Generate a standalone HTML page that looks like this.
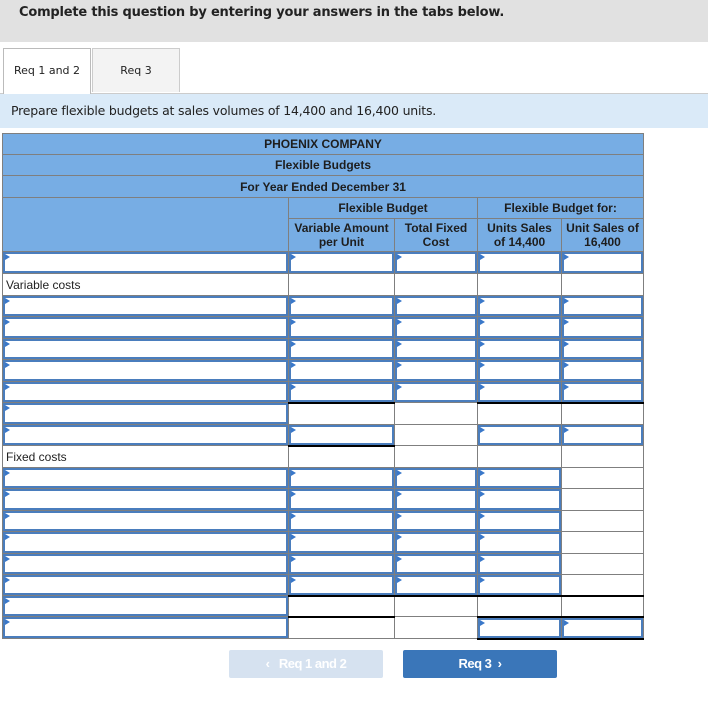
<!DOCTYPE html>
<html><head><meta charset="utf-8"><style>
body{margin:0;width:708px;height:702px;background:#fff;font-family:"Liberation Sans",Arial,sans-serif;position:relative;overflow:hidden}
.top{position:absolute;left:0;top:0;width:708px;height:42px;background:#e1e1e1}
.top span{position:absolute;left:19px;top:5px;font:bold 13px "DejaVu Sans",Verdana,sans-serif;color:#222;letter-spacing:-0.2px}
.tab{position:absolute;top:48px;height:44px;font:11px "DejaVu Sans",Verdana,sans-serif;color:#222;text-align:center;line-height:44px;box-sizing:border-box}
.t1{left:3px;width:88px;background:#fff;border:1px solid #bbb;border-bottom:none;height:46px}
.t2{left:92px;width:88px;background:#f3f3f3;border:1px solid #ccc;border-bottom:none}
.instr{position:absolute;left:0;top:93px;width:708px;height:34px;background:#daeaf8;border-top:1px solid #ccc}
.instr span{position:absolute;left:11px;top:9px;font:12.5px "DejaVu Sans",Verdana,sans-serif;color:#222;letter-spacing:-0.2px}
table{position:absolute;left:2px;top:133px;border-collapse:collapse;table-layout:fixed;font-size:12px;color:#222}
td{border:1px solid #7f7f7f;padding:0;position:relative;box-sizing:border-box}
.h td{background:#77ade4;text-align:center;font-weight:bold;color:#1e1e1e}
.i::before{content:"";position:absolute;left:0;top:0;right:0;bottom:0;border:2px solid #4a7dbd}
.i::after{content:"";position:absolute;left:2px;top:2px;border-left:5px solid #3a78c9;border-top:3px solid transparent;border-bottom:3px solid transparent;height:0}
.lab{padding-left:3px;font-size:12px}
.bk{border-top:2px solid #000}
.bb{border-bottom:2px solid #000}
.btn{position:absolute;top:650px;height:28px;width:154px;border-radius:2px;color:#fff;font:bold 13px "Liberation Sans",Arial,sans-serif;text-align:center;line-height:28px;letter-spacing:-0.5px}
</style></head><body>
<div class="top"><span>Complete this question by entering your answers in the tabs below.</span></div>
<div class="tab t2">Req 3</div>
<div class="instr"><span>Prepare flexible budgets at sales volumes of 14,400 and 16,400 units.</span></div>
<div class="tab t1">Req 1 and 2</div>
<table>
<colgroup><col style="width:286px"><col style="width:106px"><col style="width:83px"><col style="width:84px"><col style="width:82px"></colgroup>
<tr class="h" style="height:21px"><td colspan="5">PHOENIX COMPANY</td></tr>
<tr class="h" style="height:21px"><td colspan="5">Flexible Budgets</td></tr>
<tr class="h" style="height:22px"><td colspan="5">For Year Ended December 31</td></tr>
<tr class="h" style="height:21px"><td rowspan="2"></td><td colspan="2">Flexible Budget</td><td colspan="2">Flexible Budget for:</td></tr>
<tr class="h" style="height:33px"><td style="line-height:14px">Variable Amount<br>per Unit</td><td style="line-height:14px">Total Fixed<br>Cost</td><td style="line-height:14px">Units Sales<br>of 14,400</td><td style="line-height:14px">Unit Sales of<br>16,400</td></tr>
<tr style="height:22px"><td class="i"></td><td class="i"></td><td class="i"></td><td class="i"></td><td class="i"></td></tr>
<tr style="height:22px"><td class="lab">Variable costs</td><td></td><td></td><td></td><td></td></tr>
<tr style="height:21px"><td class="i"></td><td class="i"></td><td class="i"></td><td class="i"></td><td class="i"></td></tr>
<tr style="height:22px"><td class="i"></td><td class="i"></td><td class="i"></td><td class="i"></td><td class="i"></td></tr>
<tr style="height:21px"><td class="i"></td><td class="i"></td><td class="i"></td><td class="i"></td><td class="i"></td></tr>
<tr style="height:22px"><td class="i"></td><td class="i"></td><td class="i"></td><td class="i"></td><td class="i"></td></tr>
<tr style="height:21px"><td class="i"></td><td class="i"></td><td class="i"></td><td class="i"></td><td class="i"></td></tr>
<tr style="height:22px"><td class="i"></td><td class="bk"></td><td></td><td class="bk"></td><td class="bk"></td></tr>
<tr style="height:21px"><td class="i"></td><td class="i bb"></td><td></td><td class="i"></td><td class="i"></td></tr>
<tr style="height:22px"><td class="lab">Fixed costs</td><td></td><td></td><td></td><td></td></tr>
<tr style="height:21px"><td class="i"></td><td class="i"></td><td class="i"></td><td class="i"></td><td></td></tr>
<tr style="height:22px"><td class="i"></td><td class="i"></td><td class="i"></td><td class="i"></td><td></td></tr>
<tr style="height:21px"><td class="i"></td><td class="i"></td><td class="i"></td><td class="i"></td><td></td></tr>
<tr style="height:22px"><td class="i"></td><td class="i"></td><td class="i"></td><td class="i"></td><td></td></tr>
<tr style="height:21px"><td class="i"></td><td class="i"></td><td class="i"></td><td class="i"></td><td></td></tr>
<tr style="height:21px"><td class="i"></td><td class="i"></td><td class="i"></td><td class="i"></td><td></td></tr>
<tr style="height:21px"><td class="i"></td><td class="bk"></td><td class="bk"></td><td class="bk"></td><td class="bk"></td></tr>
<tr style="height:22px"><td class="i"></td><td class="bk"></td><td></td><td class="i bk bb"></td><td class="i bk bb"></td></tr>
</table>
<div class="btn" style="left:229px;background:#d6e2f0">&#8249;&nbsp;&nbsp; Req 1 and 2</div>
<div class="btn" style="left:403px;background:#3a76b9">Req 3 &nbsp;&#8250;</div>
</body></html>
